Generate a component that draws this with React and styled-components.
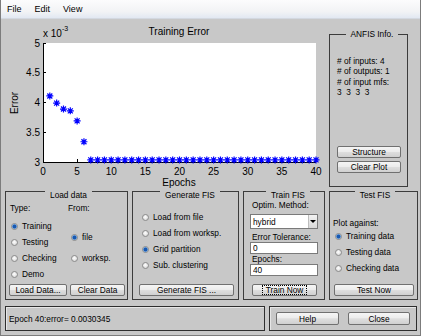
import React from "react";
import styled, { createGlobalStyle, css } from "styled-components";

const GlobalStyle = createGlobalStyle`
  html, body {
    margin: 0;
    padding: 0;
    background: #ffffff;
  }
  * {
    box-sizing: border-box;
  }
`;

const UI_FONT = `"Liberation Sans", Arial, sans-serif`;
const FACE = "#c8c8c8";

const Window = styled.div`
  width: 421px;
  height: 336px;
  background: ${FACE};
  border: 1px solid #7c7c7c;
  border-top: none;
  display: flex;
  flex-direction: column;
  font-family: ${UI_FONT};
  font-size: 8.3px;
  color: #000;
  overflow: hidden;
`;

const MenuBar = styled.div`
  height: 19px;
  display: flex;
  align-items: center;
  gap: 13px;
  padding-left: 6px;
  background: linear-gradient(#fcfcfd, #f2f3f5 65%, #e2e8f2);
  border-bottom: 1px solid #d3d8e0;
  font-size: 9px;
`;

const Main = styled.div`
  display: flex;
  height: 170px;
`;

const PlotSvg = styled.svg`
  display: block;
  flex: none;
`;

const Panel = styled.div`
  flex: none;
  width: ${({ $w }) => $w}px;
  height: ${({ $h }) => $h}px;
  margin: ${({ $m }) => $m || 0};
  border: 1px solid #3c3c3c;
  display: flex;
  flex-direction: column;
  padding: ${({ $pad }) => $pad || 0};
`;

const PanelTitle = styled.div`
  align-self: center;
  margin-top: ${({ $mt }) => ($mt === undefined ? -2 : $mt)}px;
  padding: 0 5px;
  background: ${FACE};
  line-height: 10px;
  white-space: nowrap;
`;

const InfoText = styled.div`
  margin-top: 17px;
  line-height: 10.3px;
  white-space: pre;
`;

const InfoButtons = styled.div`
  margin-top: auto;
  margin-bottom: 13px;
  display: flex;
  flex-direction: column;
  gap: 3px;
`;

const Button = styled.button`
  flex: none;
  width: ${({ $w }) => $w}px;
  height: ${({ $h }) => $h || 12}px;
  margin-left: ${({ $ml }) => $ml || 0}px;
  padding: 0;
  border: 1px solid #707070;
  border-radius: 2px;
  background: linear-gradient(#f5f5f5, #ececec 45%, #dedede 52%, #d0d0d0);
  font-family: ${UI_FONT};
  font-size: 8.3px;
  color: #000;
  display: flex;
  align-items: center;
  justify-content: center;
  cursor: default;
`;

const FocusText = styled.span`
  border: 1px dotted #000;
  padding: 0 3px;
  line-height: 8px;
`;

const ControlRow = styled.div`
  display: flex;
  gap: 4px;
  padding: 2px 0 0 4px;
  height: 111px;
`;

const Columns = styled.div`
  display: flex;
  margin-top: 2px;
`;

const Col = styled.div`
  display: flex;
  flex-direction: column;
  width: ${({ $w }) => $w || "auto"};
`;

const Caption = styled.div`
  line-height: ${({ $lh }) => $lh || 10}px;
  margin-top: ${({ $mt }) => $mt || 0}px;
  white-space: nowrap;
`;

const RadioRow = styled.div`
  display: flex;
  align-items: center;
  gap: 4px;
  height: 16px;
  margin-top: ${({ $mt }) => $mt || 0}px;
  padding-left: ${({ $pl }) => $pl || 0}px;
  white-space: nowrap;
`;

const RadioDot = styled.span`
  flex: none;
  width: 7px;
  height: 7px;
  border-radius: 50%;
  border: 1px solid #8c8c8c;
  background: radial-gradient(circle at 45% 40%, #ffffff, #e4e4e4 55%, #c9c9c9);
  ${({ $checked }) =>
    $checked &&
    css`
      background: radial-gradient(circle, #1858b0 0 1.6px, #6fa6e6 2.2px, #f0f0f0 3px);
    `}
`;

const ButtonRow = styled.div`
  display: flex;
  gap: ${({ $gap }) => $gap || 0}px;
  margin-top: auto;
  margin-bottom: 3px;
`;

const Select = styled.div`
  width: 68px;
  height: 15px;
  margin: 4px 0 0 -2px;
  border: 1px solid #7a7a7a;
  background: #fff;
  display: flex;
  align-items: center;
  padding-left: 2px;
`;

const SelectArrow = styled.span`
  margin-left: auto;
  width: 9px;
  height: 13px;
  background: linear-gradient(#f2f2f2, #d8d8d8);
  border-left: 1px solid #bdbdbd;
  display: flex;
  align-items: center;
  justify-content: center;
  &::after {
    content: "";
    border-left: 3px solid transparent;
    border-right: 3px solid transparent;
    border-top: 3px solid #000;
  }
`;

const Field = styled.input`
  width: 68px;
  height: 12px;
  margin-left: -2px;
  border: 1px solid #7a7a7a;
  background: #fff;
  font-family: ${UI_FONT};
  font-size: 8.3px;
  color: #000;
  padding: 0 2px;
  outline: none;
`;

const StatusRow = styled.div`
  display: flex;
  gap: 4px;
  padding-left: 4px;
  margin-top: 6px;
`;

const StatusBox = styled.div`
  width: ${({ $w }) => $w}px;
  height: 25px;
  border: 1px solid #2e2e2e;
  box-shadow: inset 1px 1px 0 #e6e6e6;
  display: flex;
  align-items: center;
  gap: ${({ $gap }) => $gap || 0}px;
  padding-left: ${({ $pl }) => $pl || 0}px;
`;

function Radio({ checked, mt, pl, children }) {
  return (
    <RadioRow $mt={mt} $pl={pl}>
      <RadioDot $checked={checked} />
      <span>{children}</span>
    </RadioRow>
  );
}

const X0 = 43;
const X1 = 316;
const Y0 = 162;
const Y1 = 43;
const xs = (e) => X0 + (e * (X1 - X0)) / 40;
const ys = (v) => Y0 - ((v - 3) * (Y0 - Y1)) / 2;
const errors = [4.11, 3.99, 3.89, 3.86, 3.69, 3.34, ...Array(34).fill(3.0345)];
const yTicks = [3, 3.5, 4, 4.5, 5];
const xTicks = [0, 5, 10, 15, 20, 25, 30, 35, 40];

function Star({ x, y }) {
  const d = `M${x - 3.5} ${y}h7M${x} ${y - 3.5}v7M${x - 2.5} ${y - 2.5}l5 5M${x - 2.5} ${y + 2.5}l5 -5`;
  return <path d={d} />;
}

function ErrorPlot() {
  return (
    <PlotSvg width="322" height="170" viewBox="1 19 322 170" fontFamily={UI_FONT} fontSize="10">
      <rect x={X0} y={Y1} width={X1 - X0} height={Y0 - Y1} fill="#fff" />
      <g stroke="#000" strokeWidth="1" shapeRendering="crispEdges">
        <line x1={X0} y1={Y1} x2={X0} y2={Y0} />
        <line x1={X0} y1={Y0} x2={X1} y2={Y0} />
        {yTicks.map((v) => (
          <line key={v} x1={X0} y1={ys(v)} x2={X0 + 3} y2={ys(v)} />
        ))}
        {xTicks.map((e) => (
          <line key={e} x1={xs(e)} y1={Y0} x2={xs(e)} y2={Y0 - 3} />
        ))}
      </g>
      <g fill="#000">
        {yTicks.map((v) => (
          <text key={v} x="40" y={ys(v) + 3.5} textAnchor="end">
            {v}
          </text>
        ))}
        {xTicks.map((e) => (
          <text key={e} x={xs(e)} y="175" textAnchor="middle">
            {e}
          </text>
        ))}
        <text x="43" y="37">x 10</text>
        <text x="62" y="31" fontSize="7">-3</text>
        <text x="179" y="35" textAnchor="middle">Training Error</text>
        <text x="179" y="186" textAnchor="middle">Epochs</text>
        <text transform="translate(18 103) rotate(-90)" textAnchor="middle">
          Error
        </text>
      </g>
      <g stroke="#0000ff" strokeWidth="1.2" fill="none">
        {errors.map((v, i) => (
          <Star key={i} x={xs(i + 1)} y={ys(v)} />
        ))}
      </g>
    </PlotSvg>
  );
}

export default function App() {
  return (
    <>
      <GlobalStyle />
      <Window>
        <MenuBar>
          <span>File</span>
          <span>Edit</span>
          <span>View</span>
        </MenuBar>

        <Main>
          <ErrorPlot />
          <Panel $w={79} $h={153} $m="15px 0 0 6px" $pad="0 0 0 7px">
            <PanelTitle $mt={-6}>ANFIS Info.</PanelTitle>
            <InfoText>
              {"# of inputs: 4\n# of outputs: 1\n# of input mfs:\n3  3  3  3"}
            </InfoText>
            <InfoButtons>
              <Button $w={64}>Structure</Button>
              <Button $w={64}>Clear Plot</Button>
            </InfoButtons>
          </Panel>
        </Main>

        <ControlRow>
          <Panel $w={123} $h={109} $pad="0 0 0 4px">
            <PanelTitle>Load data</PanelTitle>
            <Columns>
              <Col $w="58px">
                <Caption $lh={12}>Type:</Caption>
                <Radio checked mt={4} pl={1}>Training</Radio>
                <Radio pl={1}>Testing</Radio>
                <Radio pl={1}>Checking</Radio>
                <Radio pl={1}>Demo</Radio>
              </Col>
              <Col>
                <Caption $lh={12}>From:</Caption>
                <Radio checked mt={15} pl={3}>file</Radio>
                <Radio mt={5} pl={3}>worksp.</Radio>
              </Col>
            </Columns>
            <ButtonRow $gap={3}>
              <Button $w={58} $ml={-1}>Load Data...</Button>
              <Button $w={55}>Clear Data</Button>
            </ButtonRow>
          </Panel>

          <Panel $w={107} $h={109} $pad="0 0 0 9px">
            <PanelTitle>Generate FIS</PanelTitle>
            <Col>
              <Radio mt={9}>Load from file</Radio>
              <Radio>Load from worksp.</Radio>
              <Radio checked>Grid partition</Radio>
              <Radio>Sub. clustering</Radio>
            </Col>
            <ButtonRow>
              <Button $w={95} $ml={-3}>Generate FIS ...</Button>
            </ButtonRow>
          </Panel>

          <Panel $w={82} $h={109} $pad="0 0 0 8px">
            <PanelTitle>Train FIS</PanelTitle>
            <Caption>Optim. Method:</Caption>
            <Select>
              <span>hybrid</span>
              <SelectArrow />
            </Select>
            <Caption $mt={3}>Error Tolerance:</Caption>
            <Field readOnly value="0" />
            <Caption>Epochs:</Caption>
            <Field readOnly value="40" />
            <ButtonRow>
              <Button $w={65}>
                <FocusText>Train Now</FocusText>
              </Button>
            </ButtonRow>
          </Panel>

          <Panel $w={89} $h={109} $pad="0 0 0 3px">
            <PanelTitle>Test FIS</PanelTitle>
            <Caption $mt={18}>Plot against:</Caption>
            <Radio checked pl={2}>Training data</Radio>
            <Radio pl={2}>Testing data</Radio>
            <Radio pl={2}>Checking data</Radio>
            <ButtonRow>
              <Button $w={80} $ml={1}>Test Now</Button>
            </ButtonRow>
          </Panel>
        </ControlRow>

        <StatusRow>
          <StatusBox $w={260} $pl={3}>Epoch 40:error= 0.0030345</StatusBox>
          <StatusBox $w={148} $pl={6} $gap={9}>
            <Button $w={63} $h={13}>Help</Button>
            <Button $w={62} $h={13}>Close</Button>
          </StatusBox>
        </StatusRow>
      </Window>
    </>
  );
}
